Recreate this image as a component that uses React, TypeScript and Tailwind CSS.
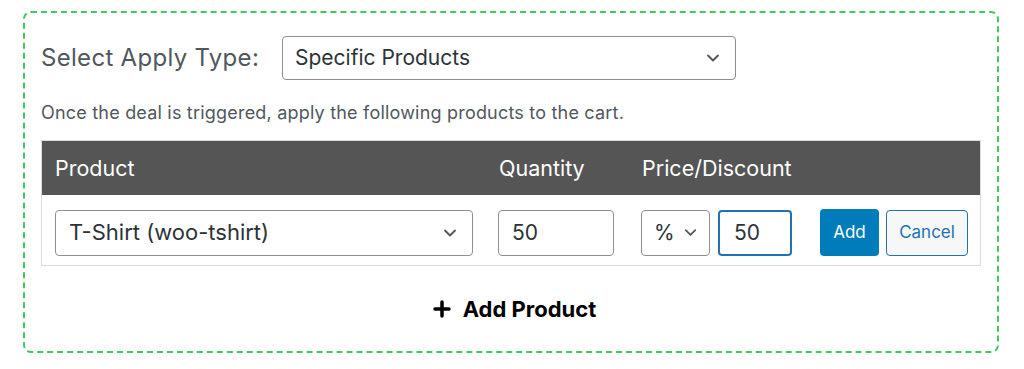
import { ChevronDown, Plus } from "lucide-react";

function Chevron({ className }: { className?: string }) {
  return <ChevronDown className={className} strokeWidth={2.25} />;
}

export default function App() {
  return (
    <div className="h-[369px] w-[1024px] bg-white pl-[23px] pt-[11px] font-['Inter',sans-serif]">
      <div className="h-[342px] w-[976px] rounded-lg border-2 border-dashed border-[#40c95f] px-[16px] pt-[23px]">
        {/* Apply type */}
        <div className="flex items-center">
          <span className="w-[241px] text-[24px] tracking-[0.3px] text-[#50575e]">Select Apply Type:</span>
          <div className="flex h-[44px] w-[454px] items-center justify-between rounded-[4px] border border-[#8c8f94] pl-[12px] pr-[12px] text-[21px] text-[#2c3338]">
            <span>Specific Products</span>
            <Chevron className="h-[20px] w-[20px] text-[#50575e]" />
          </div>
        </div>

        <p className="mt-[20px] text-[18px] leading-[26px] tracking-[0.2px] text-[#50575e]">
          Once the deal is triggered, apply the following products to the cart.
        </p>

        {/* Products table */}
        <div className="mt-[14px] w-[940px] border border-[#dcdcde]">
          <div className="flex h-[54px] items-center bg-[#555555] pl-[13px] text-[21.5px] text-white">
            <span className="w-[444px]">Product</span>
            <span className="w-[143px]">Quantity</span>
            <span>Price/Discount</span>
          </div>
          <div className="flex items-center pb-[9px] pl-[13px] pt-[14px]">
            <div className="flex h-[46px] w-[418px] items-center justify-between rounded-[4px] border border-[#8c8f94] pl-[13px] pr-[12px] text-[22px] text-[#2c3338]">
              <span>T-Shirt (woo-tshirt)</span>
              <Chevron className="h-[20px] w-[20px] text-[#50575e]" />
            </div>
            <div className="ml-[25px] flex h-[46px] w-[116px] items-center rounded-[4px] border border-[#8c8f94] pl-[13px] text-[21px] text-[#2c3338]">
              50
            </div>
            <div className="ml-[27px] flex h-[46px] w-[69px] items-center justify-between rounded-[4px] border border-[#8c8f94] pl-[12px] pr-[9px] text-[21px] text-[#2c3338]">
              <span>%</span>
              <Chevron className="h-[19px] w-[19px] text-[#50575e]" />
            </div>
            <div className="ml-[8px] flex h-[46px] w-[74px] items-center rounded-[4px] border-2 border-[#2271b1] pl-[14px] text-[21px] text-[#2c3338]">
              50
            </div>
            <button className="ml-[28px] h-[47px] w-[59px] rounded-[4px] bg-[#007cba] text-[17px] text-white">
              Add
            </button>
            <button className="ml-[7px] h-[46px] w-[82px] rounded-[4px] border border-[#2271b1] bg-[#f6f7f7] text-[17px] text-[#2271b1]">
              Cancel
            </button>
          </div>
        </div>

        {/* Add product */}
        <div className="mt-[28px] flex h-[30px] items-center justify-center pl-[4px]">
          <Plus className="h-[24px] w-[24px] text-black" strokeWidth={3.5} />
          <span className="ml-[9px] text-[22px] font-bold text-black">Add Product</span>
        </div>
      </div>
    </div>
  );
}
